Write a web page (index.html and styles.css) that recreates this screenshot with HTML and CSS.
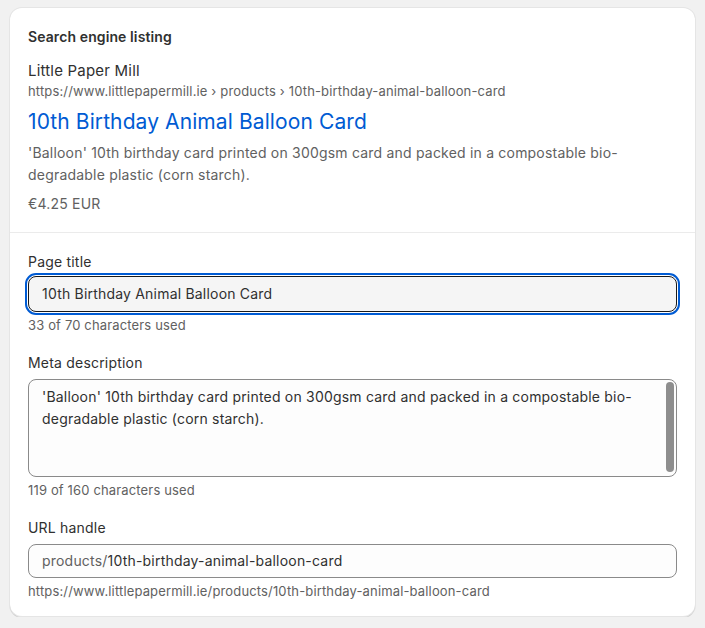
FILE: index.html
```html
<!DOCTYPE html>
<html lang="en">
<head>
<meta charset="utf-8">
<title>Search engine listing</title>
<link rel="stylesheet" href="styles.css">
</head>
<body>
<div class="card">
  <section class="preview">
    <h2 class="heading">Search engine listing</h2>
    <div class="site">Little Paper Mill</div>
    <div class="crumb">https://www.littlepapermill.ie › products › 10th-birthday-animal-balloon-card</div>
    <a class="title" href="#">10th Birthday Animal Balloon Card</a>
    <p class="desc">'Balloon' 10th birthday card printed on 300gsm card and packed in a compostable bio-degradable plastic (corn starch).</p>
    <div class="price">€4.25 EUR</div>
  </section>
  <section class="form">
    <div class="field">
      <label class="label label-tight">Page title</label>
      <div class="input focused">10th Birthday Animal Balloon Card</div>
      <div class="help">33 of 70 characters used</div>
    </div>
    <div class="field">
      <label class="label">Meta description</label>
      <div class="textarea">'Balloon' 10th birthday card printed on 300gsm card and packed in a compostable bio-degradable plastic (corn starch).<span class="thumb"></span></div>
      <div class="help">119 of 160 characters used</div>
    </div>
    <div class="field">
      <label class="label">URL handle</label>
      <div class="input url"><span class="prefix">products/</span>10th-birthday-animal-balloon-card</div>
      <div class="help">https://www.littlepapermill.ie/products/10th-birthday-animal-balloon-card</div>
    </div>
  </section>
</div>
</body>
</html>
```

FILE: styles.css
```css
* { box-sizing: border-box; }
html, body { margin: 0; padding: 0; }
body {
  background: #f1f1f1;
  font-family: Inter, "Noto Sans", sans-serif;
  color: #303030;
  padding: 8px 10px 0 10px;
}
.card {
  background: #fff;
  border-radius: 12px;
  box-shadow: 0 1px 0 0 rgba(26,26,26,0.10), 0 0 0 1px rgba(26,26,26,0.05), inset 0 -1px 0 0 rgba(204,204,204,0.5);
  width: 685px;
  overflow: hidden;
}
.preview {
  padding: 19px 18px 18px 18px;
  border-bottom: 1px solid #ebebeb;
  display: flex;
  flex-direction: column;
}
.heading {
  margin: 0;
  font-size: 14px;
  font-weight: 600;
  line-height: 20px;
  letter-spacing: 0.1px;
}
.site {
  margin-top: 14px;
  font-size: 15px;
  line-height: 20px;
  letter-spacing: 0.2px;
}
.crumb {
  font-size: 13px;
  line-height: 20px;
  color: #616161;
  letter-spacing: 0.15px;
}
.title {
  margin-top: 7px;
  font-size: 21px;
  line-height: 28px;
  color: #005bd3;
  text-decoration: none;
  letter-spacing: 0.1px;
}
.desc {
  margin: 6px 0 0 0;
  font-size: 14px;
  line-height: 22px;
  color: #616161;
  letter-spacing: 0.2px;
}
.price {
  margin-top: 8px;
  font-size: 14px;
  line-height: 20px;
  color: #616161;
  letter-spacing: 0.2px;
}
.form {
  padding: 19px 18px 16px 18px;
  display: flex;
  flex-direction: column;
  gap: 18px;
}
.field { display: flex; flex-direction: column; flex-shrink: 0; }
.label {
  font-size: 14px;
  line-height: 20px;
  margin-bottom: 6px;
  letter-spacing: 0.2px;
}
.label-tight { margin-bottom: 4px; }
.input {
  flex-shrink: 0;
  height: 36px;
  border: 1px solid #8a8a8a;
  border-radius: 8px;
  background: #fdfdfd;
  font-size: 14px;
  line-height: 20px;
  padding: 7px 13px;
  letter-spacing: 0.2px;
}
.input.focused {
  border-color: #1a1a1a;
  background: #f5f5f5;
  outline: 2px solid #005bd3;
  outline-offset: 1px;
}
.input.url { height: 34px; padding: 6px 13px; }
.prefix { color: #616161; }
.help {
  font-size: 13px;
  line-height: 20px;
  color: #616161;
  margin-top: 3px;
  letter-spacing: 0.15px;
}
.textarea {
  flex-shrink: 0;
  position: relative;
  height: 98px;
  border: 1px solid #8a8a8a;
  border-radius: 8px;
  background: #fdfdfd;
  font-size: 14px;
  line-height: 22px;
  padding: 6px 40px 0 13px;
  letter-spacing: 0.2px;
}
.thumb {
  position: absolute;
  right: 2px;
  top: 2px;
  bottom: 4px;
  width: 8px;
  border-radius: 4px;
  background: #8e8e8e;
}
```
